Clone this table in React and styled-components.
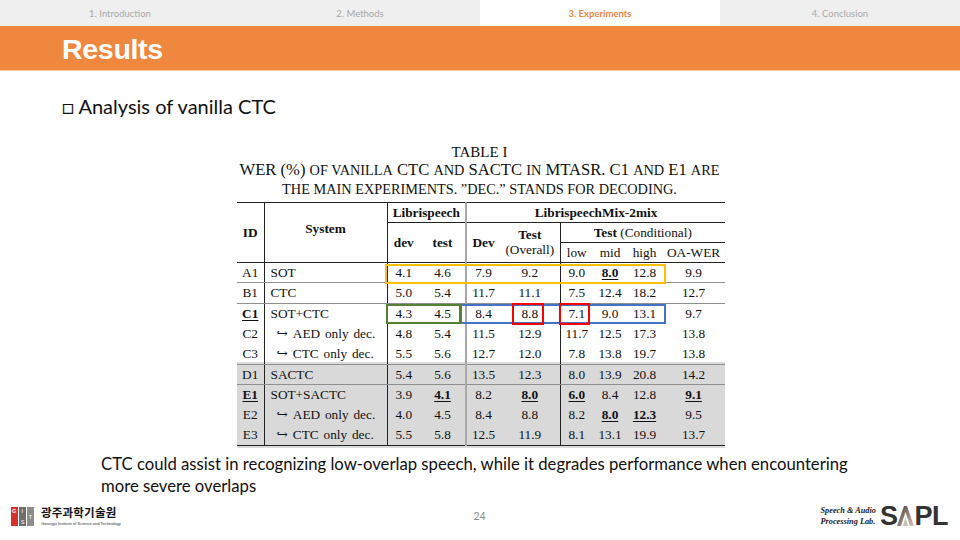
import React from "react";
import styled, { createGlobalStyle } from "styled-components";

const Global = createGlobalStyle`
  html, body { margin: 0; padding: 0; background: #fff; }
  body { font-family: Lato, "Liberation Sans", sans-serif; }
`;

const Slide = styled.div`
  width: 960px;
  height: 540px;
  display: flex;
  flex-direction: column;
  overflow: hidden;
  background: #fff;
`;

const Nav = styled.nav`
  height: 27px;
  display: grid;
  grid-template-columns: repeat(4, 1fr);
  background: #efefef;
`;

const NavTab = styled.div`
  display: flex;
  align-items: center;
  justify-content: center;
  font-size: 9.5px;
  font-family: Lato, sans-serif;
  color: ${(p) => (p.$active ? "#ef8540" : "#a9a9a9")};
  font-weight: ${(p) => (p.$active ? 700 : 400)};
  background: ${(p) => (p.$active ? "#ffffff" : "transparent")};
`;

const TitleBar = styled.header`
  height: 45px;
  background: #f0873f;
  border-bottom: 1px solid #f6c8a6;
  display: flex;
  align-items: center;
  padding: 3px 0 0 62px;
  box-sizing: border-box;
`;

const Title = styled.h1`
  margin: 0;
  font-family: "Liberation Sans", Arial, sans-serif;
  font-weight: 700;
  font-size: 28.5px;
  color: #fff;
  letter-spacing: -0.3px;
`;

const Heading = styled.div`
  margin: 23px 0 0 62px;
  font-family: Lato, sans-serif;
  font-size: 20px;
  line-height: 24px;
  color: #111;
`;

const Figure = styled.figure`
  margin: 25px 0 0 0;
  display: flex;
  flex-direction: column;
  align-items: center;
`;

const Caption = styled.div`
  font-family: "Liberation Serif", "Times New Roman", serif;
  font-size: 16.6px;
  line-height: 17.5px;
  text-align: center;
  color: #111;
  white-space: nowrap;
  margin-bottom: 4px;
  margin-left: -1px;
`;

const CaptionHead = styled.span`
  font-size: 15px;
`;

const SmallCaps = styled.span`
  text-transform: uppercase;
  font-size: 14.3px;
`;

const TableWrap = styled.div`
  position: relative;
  width: 488px;
  margin-left: 2px;
  padding-bottom: 2px;
  background: linear-gradient(to bottom, transparent 0, transparent calc(100% - 86px), #dcdcdc calc(100% - 86px));
`;

const Table = styled.table`
  border-collapse: collapse;
  table-layout: fixed;
  width: 488px;
  font-family: "Liberation Serif", "Times New Roman", serif;
  font-size: 13.3px;
  color: #111;
  border-top: 1.6px solid #222;
  border-bottom: 1.6px solid #222;
`;

const Col = styled.col`
  width: ${(p) => p.$w}px;
`;

const HeadRow = styled.tr`
  height: 20px;
`;

const Cell = styled.td`
  padding: 0;
  text-align: ${(p) => p.$align || "center"};
  padding-left: ${(p) => p.$pl || 0}px;
  vertical-align: middle;
  white-space: nowrap;
  line-height: ${(p) => p.$lh || 1};
  font-weight: ${(p) => (p.$bold ? 700 : 400)};
  border-right: ${(p) =>
    p.$br === "dark" ? "1px solid #222" : p.$br === "gray" ? "2px solid #a8a8a8" : "none"};
  border-bottom: ${(p) =>
    p.$bb === "dark" ? "1px solid #222" : p.$bb === "thick" ? "1.6px solid #222" : "none"};
`;

const BodyRow = styled.tr`
  height: 20.3px;
  background: ${(p) => (p.$shade ? "#d9d9d9" : "transparent")};
  & > td {
    border-bottom: ${(p) =>
      p.$sep === "gray" ? "1px solid #8f8f8f" : p.$sep === "dark" ? "1.6px solid #222" : "none"};
  }
`;

const SysText = styled.span`
  word-spacing: ${(p) => (p.$arrow ? 1.5 : 0)}px;
`;

const BU = styled.span`
  font-weight: 700;
  text-decoration: underline;
  text-underline-offset: 2px;
  text-decoration-thickness: 1px;
`;

const Reg = styled.span`
  font-weight: 400;
`;

const HeadUp = styled.span`
  position: relative;
  top: -4px;
`;

const Arrow = styled.span`
  font-family: "DejaVu Serif", serif;
  font-size: 13.5px;
  margin-right: 5px;
`;

const Mark = styled.div`
  position: absolute;
  left: ${(p) => p.$x}px;
  top: ${(p) => p.$y}px;
  width: ${(p) => p.$w}px;
  height: ${(p) => p.$h}px;
  border: 2px solid ${(p) => p.$c};
  box-sizing: border-box;
  pointer-events: none;
`;

const Note = styled.p`
  margin: 5px 0 0 101px;
  font-family: Lato, sans-serif;
  font-size: 16.7px;
  line-height: 22px;
  color: #111;
  width: 770px;
`;

const Footer = styled.footer`
  margin-top: auto;
  height: 40px;
  display: grid;
  grid-template-columns: 1fr auto 1fr;
  align-items: center;
  padding: 0 12px 4px 11px;
`;

const GistLogo = styled.div`
  display: flex;
  align-items: center;
  gap: 7px;
`;

const GistText = styled.div`
  display: flex;
  flex-direction: column;
  line-height: 1;
`;

const GistKo = styled.span`
  font-family: "Noto Sans CJK KR", sans-serif;
  font-weight: 700;
  font-size: 11.5px;
  color: #111;
  letter-spacing: 0.2px;
`;

const GistEn = styled.span`
  font-family: "Liberation Sans", sans-serif;
  font-size: 4px;
  color: #333;
  margin-top: 3px;
  white-space: nowrap;
`;

const PageNum = styled.div`
  font-family: Lato, sans-serif;
  font-size: 10.5px;
  color: #8c8c8c;
`;

const SaplLogo = styled.div`
  justify-self: end;
  display: flex;
  align-items: center;
  gap: 4px;
`;

const SaplSub = styled.div`
  font-family: "Liberation Serif", serif;
  font-style: italic;
  font-weight: 700;
  font-size: 8.3px;
  line-height: 11px;
  color: #222;
  text-align: left;
`;

const SaplMark = styled.div`
  display: flex;
  align-items: center;
  font-family: "Liberation Sans", Arial, sans-serif;
  font-weight: 700;
  font-size: 27px;
  color: #333;
  letter-spacing: -0.5px;
  line-height: 1;
`;

const cols = [27, 123, 33, 46, 34, 60, 33, 34, 35, 63];

const rows = [
  { id: "A1", sys: "SOT", v: ["4.1", "4.6", "7.9", "9.2", "9.0", "8.0", "12.8", "9.9"], bu: [5], sep: "gray" },
  { id: "B1", sys: "CTC", v: ["5.0", "5.4", "11.7", "11.1", "7.5", "12.4", "18.2", "12.7"], bu: [], sep: "gray" },
  { id: "C1", idBU: true, sys: "SOT+CTC", v: ["4.3", "4.5", "8.4", "8.8", "7.1", "9.0", "13.1", "9.7"], bu: [] },
  { id: "C2", arrow: true, sys: "AED only dec.", v: ["4.8", "5.4", "11.5", "12.9", "11.7", "12.5", "17.3", "13.8"], bu: [] },
  { id: "C3", arrow: true, sys: "CTC only dec.", v: ["5.5", "5.6", "12.7", "12.0", "7.8", "13.8", "19.7", "13.8"], bu: [], sep: "gray" },
  { id: "D1", sys: "SACTC", v: ["5.4", "5.6", "13.5", "12.3", "8.0", "13.9", "20.8", "14.2"], bu: [], sep: "gray", shade: true },
  { id: "E1", idBU: true, sys: "SOT+SACTC", v: ["3.9", "4.1", "8.2", "8.0", "6.0", "8.4", "12.8", "9.1"], bu: [1, 3, 4, 7], shade: true },
  { id: "E2", arrow: true, sys: "AED only dec.", v: ["4.0", "4.5", "8.4", "8.8", "8.2", "8.0", "12.3", "9.5"], bu: [5, 6], shade: true },
  { id: "E3", arrow: true, sys: "CTC only dec.", v: ["5.5", "5.8", "12.5", "11.9", "8.1", "13.1", "19.9", "13.7"], bu: [], shade: true },
];

const valueBorder = (i) => (i === 1 ? "gray" : i === 3 ? "dark" : undefined);

function ResultsTable() {
  return (
    <TableWrap>
      <Table>
        <colgroup>
          {cols.map((w, i) => (
            <Col key={i} $w={w} />
          ))}
        </colgroup>
        <thead>
          <HeadRow>
            <Cell as="th" rowSpan={3} $bold $br="dark" $bb="thick">ID</Cell>
            <Cell as="th" rowSpan={3} $bold $br="dark" $bb="thick">
              <HeadUp>System</HeadUp>
            </Cell>
            <Cell as="th" colSpan={2} $bold $br="gray" $bb="dark">Librispeech</Cell>
            <Cell as="th" colSpan={6} $bold $bb="dark">LibrispeechMix-2mix</Cell>
          </HeadRow>
          <HeadRow>
            <Cell as="th" rowSpan={2} $bold $bb="thick">dev</Cell>
            <Cell as="th" rowSpan={2} $bold $br="gray" $bb="thick">test</Cell>
            <Cell as="th" rowSpan={2} $bold $bb="thick">Dev</Cell>
            <Cell as="th" rowSpan={2} $bold $br="dark" $bb="thick" $lh={1.1}>
              Test
              <br />
              <Reg>(Overall)</Reg>
            </Cell>
            <Cell as="th" colSpan={4} $bold $bb="dark">
              Test <Reg>(Conditional)</Reg>
            </Cell>
          </HeadRow>
          <HeadRow>
            <Cell $bb="thick">low</Cell>
            <Cell $bb="thick">mid</Cell>
            <Cell $bb="thick">high</Cell>
            <Cell $bb="thick">OA-WER</Cell>
          </HeadRow>
        </thead>
        <tbody>
          {rows.map((r) => (
            <BodyRow key={r.id} $sep={r.sep} $shade={r.shade}>
              <Cell $br="dark">{r.idBU ? <BU>{r.id}</BU> : r.id}</Cell>
              <Cell $br="dark" $align="left" $pl={r.arrow ? 12 : 6}>
                {r.arrow && <Arrow>↪</Arrow>}
                <SysText $arrow={r.arrow}>{r.sys}</SysText>
              </Cell>
              {r.v.map((val, i) => (
                <Cell key={i} $br={valueBorder(i)}>
                  {r.bu.includes(i) ? <BU>{val}</BU> : val}
                </Cell>
              ))}
            </BodyRow>
          ))}
        </tbody>
      </Table>
      <Mark $x={148} $y={62} $w={281} $h={20} $c="#ffc000" />
      <Mark $x={223} $y={102} $w={206} $h={20} $c="#4472c4" />
      <Mark $x={149} $y={102} $w={75} $h={20} $c="#548235" />
      <Mark $x={275} $y={101} $w={32} $h={22} $c="#ff0000" />
      <Mark $x={322} $y={101} $w={31} $h={22} $c="#ff0000" />
    </TableWrap>
  );
}

function GistIcon() {
  return (
    <svg width="23" height="19" viewBox="0 0 23 19">
      <rect x="0" y="0" width="7" height="19" fill="#d7312c" />
      <rect x="8" y="0" width="7" height="19" fill="#6e6e6e" />
      <rect x="16" y="0" width="7" height="19" fill="#8d8d8d" />
      <text x="1" y="6" fontSize="5.5" fill="#fff" fontFamily="Liberation Sans" fontWeight="700">G</text>
      <text x="10.5" y="6" fontSize="5.5" fill="#fff" fontFamily="Liberation Sans">I</text>
      <text x="9.8" y="17" fontSize="5.5" fill="#fff" fontFamily="Liberation Sans">S</text>
      <text x="17.8" y="12" fontSize="5.5" fill="#fff" fontFamily="Liberation Sans">T</text>
    </svg>
  );
}

function SaplA() {
  return (
    <svg width="17" height="20" viewBox="0 0 17 20">
      <defs>
        <linearGradient id="ga" x1="0" y1="0" x2="1" y2="1">
          <stop offset="0" stopColor="#4a3d37" />
          <stop offset="0.6" stopColor="#9c8a80" />
          <stop offset="1" stopColor="#d9ccc4" />
        </linearGradient>
      </defs>
      <polygon points="0,20 7,0 10,0 17,20 13,20 8.5,6 4,20" fill="url(#ga)" />
      <polygon points="6,20 8.5,11 11,20" fill="#cdbfb7" />
    </svg>
  );
}

export default function App() {
  return (
    <>
      <Global />
      <Slide>
        <Nav>
          <NavTab>1. Introduction</NavTab>
          <NavTab>2. Methods</NavTab>
          <NavTab $active>3. Experiments</NavTab>
          <NavTab>4. Conclusion</NavTab>
        </Nav>
        <TitleBar>
          <Title>Results</Title>
        </TitleBar>
        <Heading>□ Analysis of vanilla CTC</Heading>
        <Figure>
          <Caption>
            <CaptionHead>TABLE I</CaptionHead>
            <br />
            WER (%) <SmallCaps>of vanilla</SmallCaps> CTC <SmallCaps>and</SmallCaps> SACTC{" "}
            <SmallCaps>in</SmallCaps> MTASR. C1 <SmallCaps>and</SmallCaps> E1 <SmallCaps>are</SmallCaps>
            <br />
            <SmallCaps>the main experiments. ”dec.” stands for decoding.</SmallCaps>
          </Caption>
          <ResultsTable />
        </Figure>
        <Note>
          CTC could assist in recognizing low-overlap speech, while it degrades performance when encountering more
          severe overlaps
        </Note>
        <Footer>
          <GistLogo>
            <GistIcon />
            <GistText>
              <GistKo>광주과학기술원</GistKo>
              <GistEn>Gwangju Institute of Science and Technology</GistEn>
            </GistText>
          </GistLogo>
          <PageNum>24</PageNum>
          <SaplLogo>
            <SaplSub>
              Speech &amp; Audio
              <br />
              Processing Lab.
            </SaplSub>
            <SaplMark>
              S
              <SaplA />
              PL
            </SaplMark>
          </SaplLogo>
        </Footer>
      </Slide>
    </>
  );
}
